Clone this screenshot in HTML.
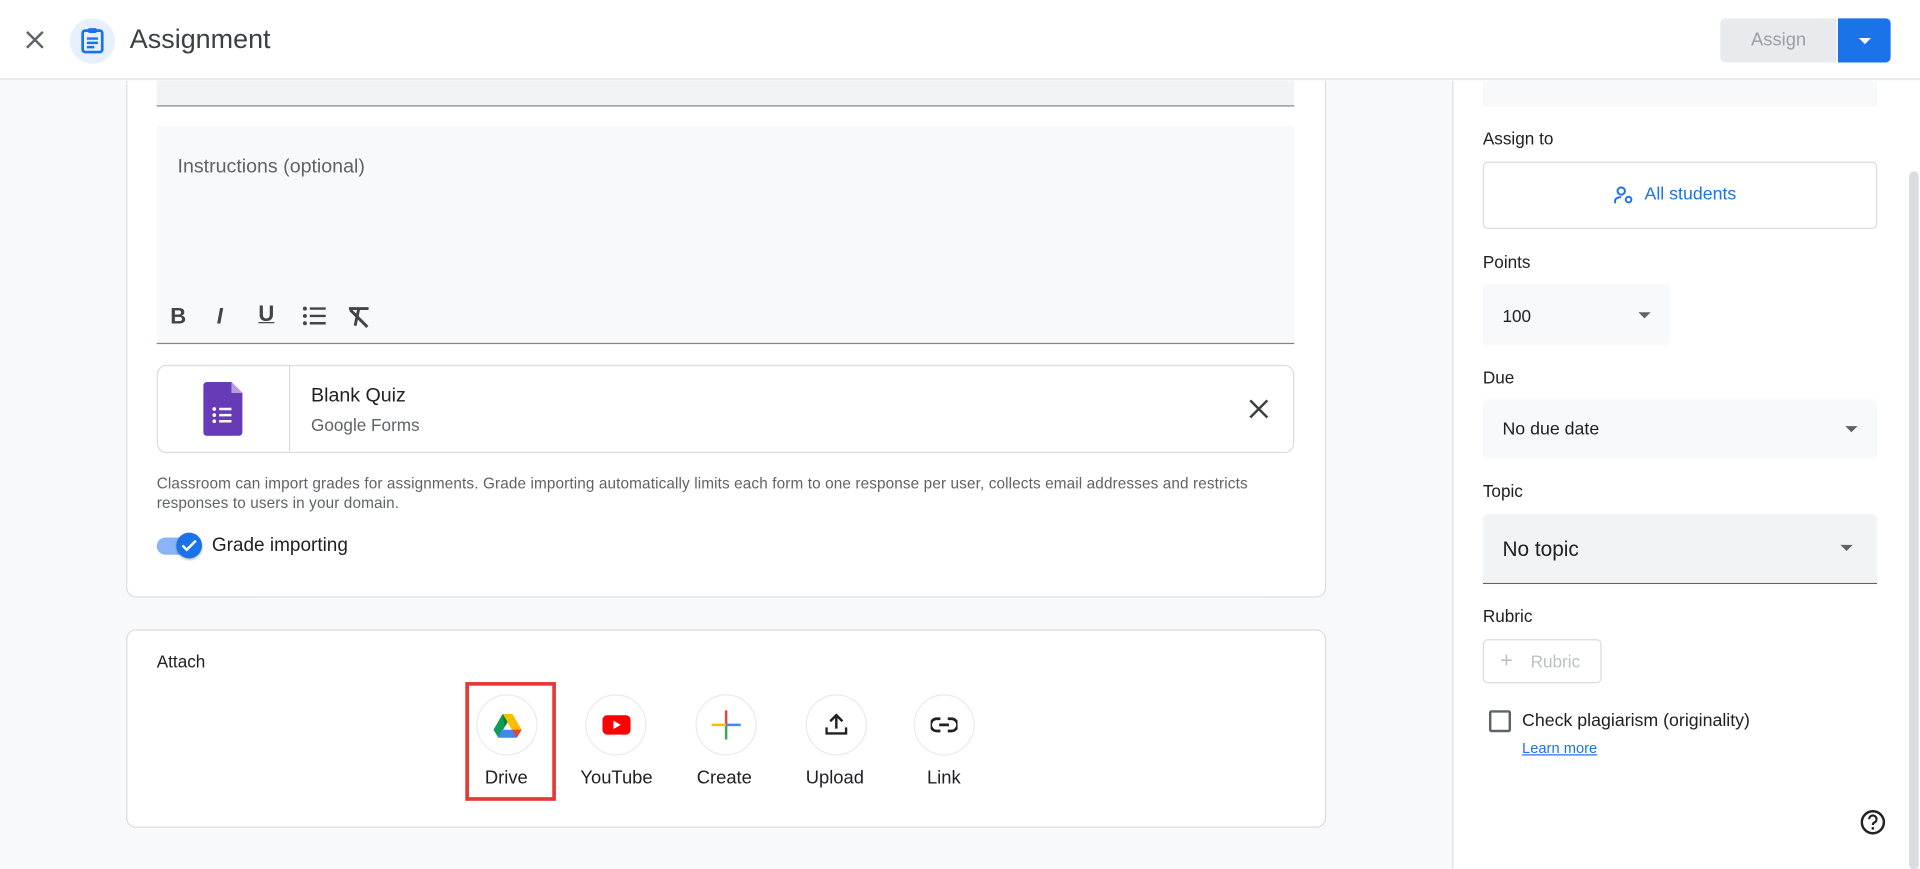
<!DOCTYPE html>
<html><head><meta charset="utf-8"><style>
*{box-sizing:border-box;margin:0;padding:0}
html,body{width:1920px;height:869px;overflow:hidden;background:#f8f9fa;font-family:"Liberation Sans",Arial,sans-serif;color:#202124}
#s{position:absolute;left:0;top:0;width:1568px;height:710px;transform:scale(1.22449);transform-origin:0 0;background:#f8f9fa}
.a{position:absolute}
.t{position:absolute;white-space:nowrap}
</style></head><body><div id="s">
<div class="a" style="left:0;top:0;width:1568px;height:65px;background:#fff;border-bottom:1px solid #dadce0"></div>
<svg class="a" style="left:20px;top:24px" width="17" height="17" viewBox="0 0 17 17"><path d="M2 2L15 15M15 2L2 15" stroke="#5f6368" stroke-width="2"/></svg>
<div class="a" style="left:57px;top:15px;width:37px;height:37px;border-radius:50%;background:#e8f0fe"></div>
<svg class="a" style="left:66px;top:22px" width="19" height="22" viewBox="0 0 19 22"><rect x="1.5" y="3" width="16" height="17.5" rx="2" fill="none" stroke="#1a73e8" stroke-width="2.2"/><rect x="6" y="1" width="7" height="4" rx="1" fill="#1a73e8"/><path d="M5 9.5h9M5 13h9M5 16.5h6" stroke="#1a73e8" stroke-width="2"/></svg>
<div class="t" style="left:106px;top:19px;font-size:22px;color:#3c4043">Assignment</div>
<div class="a" style="left:1405px;top:15px;width:95px;height:36px;background:#e8eaed;border-radius:4px 0 0 4px"></div>
<div class="t" style="left:1430px;top:24px;font-size:15px;color:#9aa0a6">Assign</div>
<div class="a" style="left:1501px;top:15px;width:43px;height:36px;background:#1a73e8;border-radius:0 4px 4px 0"></div>
<div class="a" style="left:1518px;top:31px;border-left:5px solid transparent;border-right:5px solid transparent;border-top:5px solid #fff"></div>

<div class="a" style="left:103px;top:66px;width:980px;height:422px;background:#fff;border:1px solid #dadce0;border-top:none;border-radius:0 0 8px 8px"></div>
<div class="a" style="left:128px;top:66px;width:929px;height:21px;background:#f1f3f4;border-bottom:1px solid #80868b"></div>
<div class="a" style="left:128px;top:103px;width:929px;height:178px;background:#f8f9fa;border-bottom:1px solid #80868b"></div>
<div class="t" style="left:145px;top:128px;font-size:16px;color:#5f6368">Instructions (optional)</div>
<div class="t" style="left:139px;top:248px;font-size:18px;font-weight:bold;color:#444">B</div>
<div class="t" style="left:177px;top:248px;font-size:18px;font-weight:bold;font-style:italic;color:#444">I</div>
<div class="t" style="left:211px;top:246px;font-size:18px;font-weight:bold;color:#444;text-decoration:underline">U</div>
<svg class="a" style="left:247px;top:250px" width="20" height="16"><circle cx="2" cy="2" r="1.6" fill="#444"/><circle cx="2" cy="8" r="1.6" fill="#444"/><circle cx="2" cy="14" r="1.6" fill="#444"/><path d="M6 2h13M6 8h13M6 14h13" stroke="#444" stroke-width="2"/></svg>
<svg class="a" style="left:283px;top:250px" width="20" height="18"><path d="M2 2h16M10 2L7 16M3 3l14 14" stroke="#444" stroke-width="2.4"/></svg>

<div class="a" style="left:128px;top:298px;width:929px;height:72px;border:1px solid #dadce0;border-radius:8px;background:#fff"></div>
<div class="a" style="left:236px;top:299px;width:1px;height:70px;background:#dadce0"></div>
<svg class="a" style="left:166px;top:312px" width="32" height="44" viewBox="0 0 32 44"><path d="M3 0h20l9 9v32a3 3 0 0 1-3 3H3a3 3 0 0 1-3-3V3a3 3 0 0 1 3-3z" fill="#673ab7"/><path d="M23 0l9 9h-9z" fill="#b39ddb"/><circle cx="9" cy="22" r="1.5" fill="#fff"/><circle cx="9" cy="27" r="1.5" fill="#fff"/><circle cx="9" cy="32" r="1.5" fill="#fff"/><path d="M13 22h10M13 27h10M13 32h10" stroke="#fff" stroke-width="2"/></svg>
<div class="t" style="left:254px;top:315px;font-size:16px;color:#202124">Blank Quiz</div>
<div class="t" style="left:254px;top:339px;font-size:14px;color:#5f6368">Google Forms</div>
<svg class="a" style="left:1020px;top:326px" width="16" height="16"><path d="M1 1L15 15M15 1L1 15" stroke="#3c4043" stroke-width="2"/></svg>
<div class="t" style="left:128px;top:387px;font-size:12.5px;letter-spacing:0.1px;line-height:16px;color:#5f6368">Classroom can import grades for assignments. Grade importing automatically limits each form to one response per user, collects email addresses and restricts<br>responses to users in your domain.</div>
<div class="a" style="left:128px;top:439px;width:34px;height:14px;border-radius:7px;background:#8ab4f8"></div>
<div class="a" style="left:144px;top:435px;width:21px;height:21px;border-radius:50%;background:#1a73e8;box-shadow:0 1px 2px rgba(0,0,0,.3)"></div>
<svg class="a" style="left:148px;top:440px" width="13" height="11"><path d="M1 5.5l3.5 3.5L12 1.5" stroke="#fff" stroke-width="2" fill="none"/></svg>
<div class="t" style="left:173px;top:437px;font-size:15.5px;color:#202124">Grade importing</div>

<div class="a" style="left:103px;top:514px;width:980px;height:162px;background:#fff;border:1px solid #dadce0;border-radius:8px"></div>
<div class="t" style="left:128px;top:532px;font-size:14px;color:#202124">Attach</div>
<div class="a" style="left:389px;top:567px;width:50px;height:50px;border-radius:50%;border:1px solid #e8eaed"></div>
<div class="a" style="left:478px;top:567px;width:50px;height:50px;border-radius:50%;border:1px solid #e8eaed"></div>
<div class="a" style="left:568px;top:567px;width:50px;height:50px;border-radius:50%;border:1px solid #e8eaed"></div>
<div class="a" style="left:658px;top:567px;width:50px;height:50px;border-radius:50%;border:1px solid #e8eaed"></div>
<div class="a" style="left:746px;top:567px;width:50px;height:50px;border-radius:50%;border:1px solid #e8eaed"></div>
<svg class="a" style="left:403px;top:583px" width="23" height="20" viewBox="0 0 23 20"><path d="M7.5 0h8L4 19.5 0 13z" fill="#0f9d58"/><path d="M7.5 0h8L23 13h-8z" fill="#fbbc04"/><path d="M7 13h16l-4 6.5H3.5z" fill="#4285f4"/><path d="M15 13h8l-4 6.5z" fill="#ea4335"/><path d="M7.5 0l4 6.5L9 10.5z" fill="#00832d"/></svg>
<svg class="a" style="left:492px;top:584px" width="23" height="16"><rect width="23" height="16" rx="4" fill="#ff0000"/><path d="M9 4.5v7l6-3.5z" fill="#fff"/></svg>
<svg class="a" style="left:581px;top:580px" width="24" height="24"><path d="M13 0h-2v12h2z" fill="#ea4335"/><path d="M11 12h2v12h-2z" fill="#34a853"/><path d="M0 11h12v2H0z" fill="#fbbc04"/><path d="M12 11h12v2H12z" fill="#4285f4"/></svg>
<svg class="a" style="left:674px;top:582px" width="18" height="18"><path d="M9 13V2M4 7l5-5 5 5M1 12v5h16v-5" stroke="#202124" stroke-width="2" fill="none"/></svg>
<svg class="a" style="left:760px;top:585px" width="22" height="14"><path d="M8 2H5a5 5 0 0 0 0 10h3M14 2h3a5 5 0 0 1 0 10h-3M7 7h8" stroke="#202124" stroke-width="2.2" fill="none"/></svg>
<div class="t" style="left:396px;top:627px;font-size:15px">Drive</div>
<div class="t" style="left:474px;top:627px;font-size:15px">YouTube</div>
<div class="t" style="left:569px;top:627px;font-size:15px">Create</div>
<div class="t" style="left:658px;top:627px;font-size:15px">Upload</div>
<div class="t" style="left:757px;top:627px;font-size:15px">Link</div>
<div class="a" style="left:380px;top:557px;width:74px;height:97px;border:3px solid #e53935"></div>

<div class="a" style="left:1186px;top:66px;width:382px;height:644px;background:#fff;border-left:1px solid #dadce0"></div>
<div class="a" style="left:1211px;top:66px;width:322px;height:21px;background:#f8f9fa"></div>
<div class="t" style="left:1211px;top:105px;font-size:14px;color:#202124">Assign to</div>
<div class="a" style="left:1211px;top:132px;width:322px;height:55px;border:1px solid #dadce0;border-radius:4px"></div>
<svg class="a" style="left:1318px;top:152px" width="17" height="15"><circle cx="6" cy="4" r="3" stroke="#1a73e8" stroke-width="1.6" fill="none"/><path d="M1 14v-2c0-2 2.5-3 5-3" stroke="#1a73e8" stroke-width="1.6" fill="none"/><circle cx="12" cy="11" r="2.3" stroke="#1a73e8" stroke-width="1.6" fill="none"/></svg>
<div class="t" style="left:1343px;top:151px;font-size:14.5px;color:#1a73e8">All students</div>
<div class="t" style="left:1211px;top:206px;font-size:14px">Points</div>
<div class="a" style="left:1211px;top:232px;width:153px;height:50px;background:#f8f9fa;border-radius:4px"></div>
<div class="t" style="left:1227px;top:250px;font-size:14px">100</div>
<div class="a" style="left:1338px;top:255px;border-left:5px solid transparent;border-right:5px solid transparent;border-top:5px solid #5f6368"></div>
<div class="t" style="left:1211px;top:300px;font-size:14px">Due</div>
<div class="a" style="left:1211px;top:326px;width:322px;height:49px;background:#f8f9fa;border-radius:4px"></div>
<div class="t" style="left:1227px;top:343px;font-size:14.5px">No due date</div>
<div class="a" style="left:1507px;top:348px;border-left:5px solid transparent;border-right:5px solid transparent;border-top:5px solid #5f6368"></div>
<div class="t" style="left:1211px;top:393px;font-size:14px">Topic</div>
<div class="a" style="left:1211px;top:420px;width:322px;height:57px;background:#f1f3f4;border-bottom:1px solid #5f6368;border-radius:4px 4px 0 0"></div>
<div class="t" style="left:1227px;top:439px;font-size:17px">No topic</div>
<div class="a" style="left:1503px;top:445px;border-left:5px solid transparent;border-right:5px solid transparent;border-top:5px solid #5f6368"></div>
<div class="t" style="left:1211px;top:495px;font-size:14px">Rubric</div>
<div class="a" style="left:1211px;top:522px;width:97px;height:36px;border:1px solid #dadce0;border-radius:4px"></div>
<div class="t" style="left:1225px;top:529px;font-size:18px;color:#bdc1c6">+</div>
<div class="t" style="left:1250px;top:532px;font-size:14px;color:#bdc1c6">Rubric</div>
<div class="a" style="left:1216px;top:580px;width:18px;height:18px;border:2px solid #5f6368;border-radius:2px"></div>
<div class="t" style="left:1243px;top:581px;font-size:14.5px">Check plagiarism (originality)</div>
<div class="t" style="left:1243px;top:604px;font-size:12px;color:#1a73e8;text-decoration:underline">Learn more</div>
<svg class="a" style="left:1519px;top:661px" width="21" height="21"><circle cx="10.5" cy="10.5" r="9" stroke="#202124" stroke-width="2" fill="none"/><path d="M7.5 8a3 3 0 1 1 4 2.8c-.8.4-1 1-1 2" stroke="#202124" stroke-width="1.8" fill="none"/><circle cx="10.5" cy="15.5" r="1.1" fill="#202124"/></svg>
<div class="a" style="left:1559px;top:140px;width:8px;height:570px;background:#dadce0;border-radius:4px"></div>
</div></body></html>
